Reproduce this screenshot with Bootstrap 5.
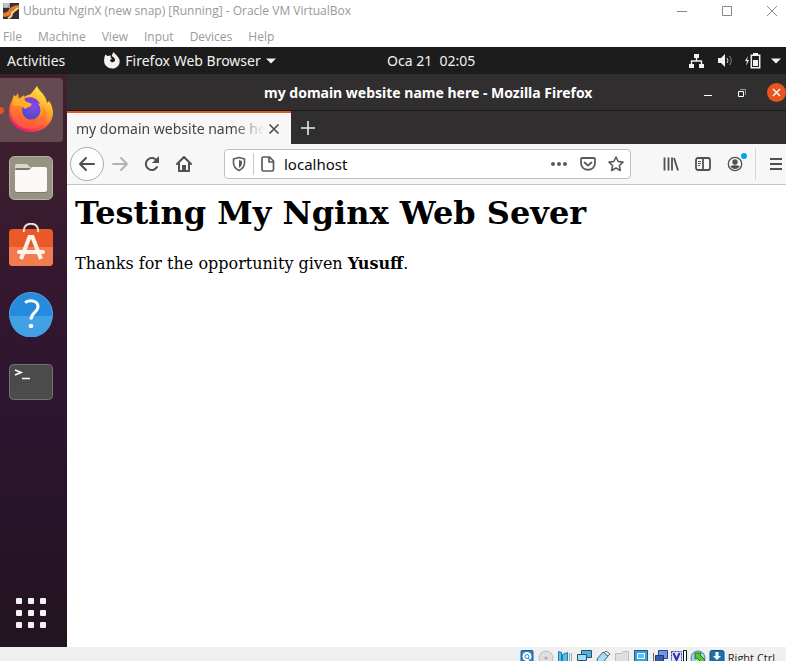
<!DOCTYPE html>
<html lang="en">
<head>
<meta charset="utf-8">
<meta name="viewport" content="width=device-width, initial-scale=1">
<title>Ubuntu NginX (new snap) [Running] - Oracle VM VirtualBox</title>
<link href="https://cdn.jsdelivr.net/npm/bootstrap@5.3.0/dist/css/bootstrap.min.css" rel="stylesheet">
<style>
  body { font-family: "Noto Sans", "Open Sans", sans-serif; font-size: 14px; line-height: 20px; color: #0c0c0d; background: #fff; }
  button { background: none; border: 0; padding: 0; color: inherit; font: inherit; display: inline-flex; align-items: center; justify-content: center; flex: none; }
  svg { display: block; flex: none; }
  .host { font-family: "Open Sans", sans-serif; font-size: 12px; color: #999; }
  .host-title { height: 22px; padding-left: 3px; margin-right: -8px; }
  .host-title button { width: 45px; height: 22px; }
  .host-menu { height: 25px; padding: 4px 3px 0; gap: 16px; }
  .topbar { height: 27px; background: #1c1c1c; color: #f2f2f2; }
  .topbar-left { width: 387px; padding-left: 7px; gap: 38px; }
  .dock { width: 67px; background: linear-gradient(#41202c, #3b1d2f 20%, #32162f 42%, #2d1530 60%, #22141f 100%); padding-top: 4px; }
  .dock-item { width: 63px; height: 64px; margin-bottom: 4px; padding-right: 2px; border-radius: 0 4px 4px 0; }
  .dock-item.current { background: #664a52; }
  .running-dot { left: -3px; top: 29px; width: 7px; height: 7px; border-radius: 50%; background: #e95420; }
  .dock-apps { height: 68px; width: 63px; padding-right: 2px; }
  .win-title { height: 37px; background: #302e2e; border-bottom: 1px solid #191919; color: #fff; padding: 1px 0 0 197px; }
  .win-title h1 { font-size: 14px; line-height: 20px; }
  .win-close { width: 19px; height: 19px; border-radius: 50%; background: #e95420; }
  .tabs { height: 33px; background: #302e2e; color: #f0f0f0; }
  .tab-current { width: 224px; background: #f7f7f8; border-top: 2px solid #e95420; color: #444; padding: 0 11px 0 9px; }
  .tab-label { width: 188px; -webkit-mask-image: linear-gradient(90deg, #000 84%, transparent 100%); mask-image: linear-gradient(90deg, #000 84%, transparent 100%); }
  .new-tab { margin-left: 10px; }
  .toolbar { height: 41px; background: #f7f7f8; border-bottom: 1px solid #c4c4c5; color: #505053; padding-left: 3px; }
  .back { width: 34px; height: 34px; border: 1px solid #aaa; border-radius: 50%; background: #fdfdfd; }
  .tool { width: 32px; height: 32px; }
  .address { height: 30px; border: 1px solid #bfbfc0; border-radius: 4px; background: #fff; margin-left: 24px; padding: 0 6px; }
  .address input { border: 0; outline: 0; background: none; min-width: 0; padding: 0; margin-left: 8px; font-size: 15px; color: #0c0c0d; }
  .address-rule { width: 1px; height: 22px; background: #c8c8c8; margin: 0 6px; }
  .tool-rule { width: 1px; height: 32px; background: #d7d7d8; }
  .menu { margin: 0 4px 0 14px; }
  .account-dot { right: 4px; top: 5px; width: 6px; height: 6px; border-radius: 50%; background: #00a5ee; }
  .page { font-family: "DejaVu Serif", serif; font-size: 16px; line-height: 19px; color: #000; padding: 9px 8px; }
  .page h2 { font-size: 32px; line-height: 38px; font-weight: 700; margin-bottom: 22px; }
  .host-status { height: 14px; background: #f0f0f0; color: #222; font-family: "Open Sans", sans-serif; font-size: 11px; line-height: 16px; padding: 3px 11px 0 0; gap: 3px; }
</style>
<script src="https://cdn.jsdelivr.net/npm/bootstrap@5.3.0/dist/js/bootstrap.bundle.min.js"></script>
</head>
<body class="d-flex flex-column vh-100 overflow-hidden">

<header class="host flex-shrink-0">
  <div class="host-title d-flex align-items-center">
    <svg width="16" height="16" viewBox="0 0 16 16"><path fill="#332e38" d="M0 0h16v16H0z"/><path fill="#9da4ad" d="M0 0h7v5H0z"/><path stroke="#e7e7e7" d="M1 1h5M1 3h4"/><path fill="none" stroke="#e87b2b" stroke-width="4" d="M0 11.500q5 1 7-3T16 4"/><path fill="none" stroke="#ffd68a" stroke-width="2" d="M5 15q4-1 4-5l6-5"/></svg>
    <span class="ms-1 flex-grow-1 text-nowrap">Ubuntu NginX (new snap) [Running] - Oracle VM VirtualBox</span>
    <button type="button" aria-label="Minimize"><svg width="12" height="12" fill="none" stroke="#888"><path d="M1 6.500h10"/></svg></button>
    <button type="button" aria-label="Maximize"><svg width="12" height="12" fill="none" stroke="#888"><path d="M1.500 1.500h9v9h-9z"/></svg></button>
    <button type="button" aria-label="Close"><svg width="12" height="12" fill="none" stroke="#888"><path d="M1 1l10 10M11 1L1 11"/></svg></button>
  </div>
  <nav class="host-menu d-flex align-items-center" aria-label="Virtual machine">
    <button type="button">File</button><button type="button">Machine</button><button type="button">View</button><button type="button">Input</button><button type="button">Devices</button><button type="button">Help</button>
  </nav>
</header>

<div class="topbar d-flex align-items-center flex-shrink-0">
  <div class="topbar-left d-flex flex-shrink-0">
    <button type="button">Activities</button>
    <button type="button">
      <svg class="me-1" width="18" height="18" viewBox="0 0 18 18"><path fill="#f2f2f2" d="M2.500 2.500L4.500 4 8 3.500 7.500 5.500 9 6.500 7 8c.3 3 4.500 3 5 .3.200-1.600-.8-2.800-2-3.300L9 4c0-1.800.8-3 2-4 .2 2 2 2 3.500 4.500C16.500 6.500 17 8 16.500 11c-.7 3.600-4 5.500-7.300 5.500C5 16.500 1.500 13.500 1.200 10 1 7.500 1.200 4.500 2.500 2.500z"/></svg>
      Firefox Web Browser
      <svg class="ms-1" width="12" height="8"><path fill="#f2f2f2" d="M1 1.500h10L6 6.500z"/></svg>
    </button>
  </div>
  <button type="button"><span class="text-nowrap">Oca 21 &nbsp;02:05</span></button>
  <button type="button" class="ms-auto me-1" aria-label="System menu">
    <svg width="94" height="18" viewBox="0 0 94 18" fill="#f2f2f2"><path d="M6 2h5v4H6zM1 12h5v4H1zM11 12h5v4h-5z"/><path fill="none" stroke="#f2f2f2" stroke-width="1.400" d="M8.500 6v3M3.500 12V9h10v3"/><path d="M30 6h3l4-4v13l-4-4h-3z"/><path fill="none" stroke="#ddd" d="M39 6q2 2.500 0 5"/><path fill="none" stroke="#888" d="M41.500 4q3.500 4.500 0 9"/><path d="M60 4l-3 5h2l-1 5 3-6h-2zM65 8h5v6h-5zM65 1h5v2h-5z"/><path fill="none" stroke="#f2f2f2" stroke-width="1.500" d="M63.300 3.300h8.400v12.400h-8.400z"/><path d="M83 6.500h10l-5 5z"/></svg>
  </button>
</div>

<div class="d-flex flex-grow-1 overflow-hidden">
  <nav class="dock d-flex flex-column flex-shrink-0" aria-label="Dock">
    <button type="button" class="dock-item current position-relative" aria-label="Firefox">
      <span class="running-dot position-absolute"></span>
      <svg width="46" height="48" viewBox="0 1 46 48"><defs><linearGradient id="fx" x1=".8" y1=".1" x2=".3" y2="1"><stop offset="0" stop-color="#ffe442"/><stop offset=".38" stop-color="#ffa52b"/><stop offset=".7" stop-color="#ff503d"/><stop offset="1" stop-color="#e91a70"/></linearGradient><radialGradient id="globe" cx=".6" cy=".3" r=".75"><stop offset="0" stop-color="#8b47e9"/><stop offset="1" stop-color="#454bc4"/></radialGradient><linearGradient id="fox" x2="0" y2="1"><stop stop-color="#ff9a22"/><stop offset="1" stop-color="#ff6236"/></linearGradient></defs><path fill="url(#fx)" d="M29 1c3 6 6 7 8 11 1 2 2 4 2 6l2-2c3 4 4 8 4 13-1 10-10 18-22 18S1 39 1 27C1 19 4 15 8 11l2-3 1 6 9-4c3 0 6-5 9-9z"/><circle cx="23" cy="25" r="9.500" fill="url(#globe)"/><path fill="#7542df" d="M14 15c6-5 15-3 18 4-5-2-9-3-14 0z"/><path fill="url(#fox)" d="M6 10l4 4 5-3 1 6c-3 7-2 13 3 17 5 3 12 2 15-3 2-4 1-8-1-11 6 4 8 12 3 18-6 8-22 8-29-1C1 30 1 19 6 10z" opacity=".7"/><path fill="#ffae24" d="M6 10l5 4 5-4 1 6 7 3c-2 4-5 3-7 5-3-4-7-4-12-3 0-4 0-7 1-11z"/></svg>
    </button>
    <button type="button" class="dock-item" aria-label="Files">
      <svg width="46" height="46" viewBox="0 0 46 46"><rect x="1.500" y="1.500" width="43" height="43" rx="5" fill="#979383" stroke="#b6b1a4"/><path fill="#dad6cc" d="M7 19V11q0-2 2-2h10l4 4v6z"/><rect x="7" y="13" width="32" height="25" rx="2" fill="#7d796c"/><path fill="#faf9f7" d="M7 15h13q2 0 3-2l1-1h13q2 0 2 2v21q0 2-2 2H9q-2 0-2-2z"/></svg>
    </button>
    <button type="button" class="dock-item" aria-label="Ubuntu Software">
      <svg width="46" height="46" viewBox="0 2 46 46"><rect x="1" y="8" width="44" height="37" rx="4" fill="#e95a28"/><path fill="#f17c50" d="M1 26h44v15q0 4-4 4H5q-4 0-4-4z"/><path fill="none" stroke="#f4ddc4" stroke-width="2" d="M16 11C14 0 32 0 30 11"/><path fill="none" stroke="#fff3ec" stroke-width="4" d="M13 38l8.500-22h3L33 38"/><path stroke="#fff3ec" stroke-width="4" stroke-linecap="round" d="M11 31h24"/></svg>
    </button>
    <button type="button" class="dock-item" aria-label="Help">
      <svg width="46" height="46" viewBox="0 0 46 46"><circle cx="23" cy="23" r="21.500" fill="#268bdc" stroke="#57a4df"/><path fill="#43a0e5" d="M1.500 25h43a21.500 21.500 0 0 1-43 0z"/><path fill="none" stroke="#fff" stroke-width="3" d="M17 11.500c5-3 13-2 13 4 0 6-7 6-7 13"/><circle cx="23" cy="35" r="2.300" fill="#fff"/></svg>
    </button>
    <button type="button" class="dock-item" aria-label="Terminal">
      <svg width="46" height="38" viewBox="0 0 46 38"><rect x="1.500" y="1.500" width="43" height="35" rx="4" fill="#4b4b4b" stroke="#737373"/><path fill="none" stroke="#fff" stroke-width="1.700" d="M7 7l6 2.500L7 12M14 15.500h8"/></svg>
    </button>
    <button type="button" class="dock-apps mt-auto" aria-label="Show Applications">
      <svg width="32" height="32" viewBox="0 0 32 32" fill="#f4f2f3"><rect x="1" y="1" width="6" height="6" rx="1"/><rect x="13" y="1" width="6" height="6" rx="1"/><rect x="25" y="1" width="6" height="6" rx="1"/><rect x="1" y="13" width="6" height="6" rx="1"/><rect x="13" y="13" width="6" height="6" rx="1"/><rect x="25" y="13" width="6" height="6" rx="1"/><rect x="1" y="25" width="6" height="6" rx="1"/><rect x="13" y="25" width="6" height="6" rx="1"/><rect x="25" y="25" width="6" height="6" rx="1"/></svg>
    </button>
  </nav>

  <main class="d-flex flex-column flex-grow-1 overflow-hidden">
    <div class="win-title d-flex align-items-center flex-shrink-0">
      <h1 class="fw-bold m-0 me-auto text-nowrap">my domain website name here - Mozilla Firefox</h1>
      <button type="button" class="me-4" aria-label="Minimize"><svg width="10" height="12"><path stroke="#fff" d="M1 8.500h8"/></svg></button>
      <button type="button" class="me-3 pe-1" aria-label="Restore"><svg width="10" height="10" fill="none" stroke="#fff"><path d="M1.500 3.500h5v5h-5z"/><path stroke="#999" d="M3 1.500h5.500V7"/></svg></button>
      <button type="button" class="win-close" aria-label="Close"><svg width="11" height="11" stroke="#fff" stroke-width="1.400"><path d="M2 2l7 7M9 2L2 9"/></svg></button>
    </div>
    <div class="tabs d-flex flex-shrink-0">
      <div class="tab-current d-flex align-items-center justify-content-between">
        <span class="tab-label text-nowrap overflow-hidden">my domain website name here</span>
        <button type="button" aria-label="Close tab"><svg width="12" height="12" stroke="#4a4a4d" stroke-width="1.600"><path d="M1.500 1.500l9 9M10.500 1.500l-9 9"/></svg></button>
      </div>
      <button type="button" class="new-tab" aria-label="New tab"><svg width="14" height="14" stroke="#e8e8e8" stroke-width="1.600"><path d="M7 0v14M0 7h14"/></svg></button>
    </div>
    <div class="toolbar d-flex align-items-center flex-shrink-0">
      <button type="button" class="back" aria-label="Back"><svg width="18" height="16" fill="none" stroke="#505053" stroke-width="2" stroke-linecap="round" stroke-linejoin="round"><path d="M8 2L2 8l6 6M2 8h14"/></svg></button>
      <button type="button" class="tool" aria-label="Forward"><svg width="18" height="16" fill="none" stroke="#b2b2b4" stroke-width="2" stroke-linecap="round" stroke-linejoin="round"><path d="M10 2l6 6-6 6M16 8H2"/></svg></button>
      <button type="button" class="tool" aria-label="Reload"><svg width="18" height="18" fill="none" stroke="#505053" stroke-width="2" stroke-linecap="round"><path d="M14 12a6 6 0 1 1 0-6"/><path fill="#505053" stroke="none" d="M16 1v7H9z"/></svg></button>
      <button type="button" class="tool" aria-label="Home"><svg width="18" height="18" fill="none" stroke="#505053" stroke-width="2" stroke-linecap="round" stroke-linejoin="round"><path d="M2 9l7-7 7 7M4 8v8h10V8"/><path fill="#505053" stroke="none" d="M7 10h4v6H7z"/></svg></button>
      <div class="address d-flex align-items-center flex-grow-1">
        <button type="button" aria-label="Tracking protection"><svg width="16" height="16" fill="none" stroke="#5b5b5e" stroke-width="1.600" stroke-linejoin="round"><path d="M8 1.500l5.500 1.500v4c0 4-2.500 6-5.500 7.500C5 13 2.500 11 2.500 7V3z"/><path fill="#5b5b5e" stroke="none" d="M8 4l3 1v2c0 2-1 3.500-3 5z"/></svg></button>
        <span class="address-rule"></span>
        <button type="button" aria-label="Site information"><svg width="16" height="16" fill="none" stroke="#5b5b5e" stroke-width="1.700" stroke-linejoin="round"><path d="M3.500 1h6l4 4v8.500q0 1.500-1.500 1.500H3.500Q2 15 2 13.500v-11Q2 1 3.500 1z"/><path d="M9 1v5h4.500"/></svg></button>
        <input type="text" class="flex-grow-1" value="localhost" aria-label="Address">
        <button type="button" class="me-2" aria-label="Page actions"><svg width="18" height="16" fill="#5b5b5e"><circle cx="3" cy="8" r="2"/><circle cx="9" cy="8" r="2"/><circle cx="15" cy="8" r="2"/></svg></button>
        <button type="button" class="mx-1" aria-label="Save to Pocket"><svg width="16" height="16" fill="none" stroke="#5b5b5e" stroke-width="1.800" stroke-linecap="round" stroke-linejoin="round"><path d="M2 2h12q1 0 1 1v4c0 9-14 9-14 0V3q0-1 1-1z"/><path d="M4.500 6.500L8 9.500l3.500-3"/></svg></button>
        <button type="button" class="ms-2" aria-label="Bookmark"><svg width="16" height="16" fill="none" stroke="#5b5b5e" stroke-width="1.600" stroke-linejoin="round"><path d="M8 1l2.100 4.500 4.900.6-3.600 3.400.9 5L8 12l-4.300 2.500.9-5L1 6.100l4.900-.6z"/></svg></button>
      </div>
      <button type="button" class="tool ms-4" aria-label="Library"><svg width="16" height="16" fill="none" stroke="#505053" stroke-width="1.800"><path d="M1.500 1.500v13M5.500 1.500v13M9 1.500v13M11 2l4 12.500"/></svg></button>
      <button type="button" class="tool" aria-label="Sidebars"><svg width="16" height="16" fill="none" stroke="#505053" stroke-width="1.800"><rect x="1" y="2" width="14" height="12" rx="2"/><path d="M8 2v12"/><path stroke-width="1" d="M3 5.500h3M3 7.500h3M3 9.500h2"/></svg></button>
      <button type="button" class="tool position-relative" aria-label="Account"><svg width="16" height="16"><circle cx="8" cy="8" r="6.700" fill="none" stroke="#505053" stroke-width="1.300"/><circle cx="8" cy="6" r="2.700" fill="#505053"/><path fill="#505053" d="M3.500 10c2-1 7-1 9 0-1 4-8 4-9 0z"/></svg><span class="account-dot position-absolute"></span></button>
      <span class="tool-rule ms-1"></span>
      <button type="button" class="menu" aria-label="Menu"><svg width="12" height="14" stroke="#505053" stroke-width="2"><path d="M0 2h12M0 7h12M0 12h12"/></svg></button>
    </div>
    <article class="page flex-grow-1">
      <h2>Testing My Nginx Web Sever</h2>
      <p class="m-0">Thanks for the opportunity given <b>Yusuff</b>.</p>
    </article>
  </main>
</div>

<footer class="host-status d-flex justify-content-end align-items-start overflow-hidden flex-shrink-0">
  <svg width="16" height="16"><rect x="2" y=".5" width="12" height="14" rx="1" fill="#2f82bd" stroke="#17629c"/><circle cx="8" cy="6.500" r="4.500" fill="#fff"/><circle cx="8" cy="6.500" r="2" fill="none" stroke="#2f82bd"/><path stroke="#2f82bd" d="M9 8l4 4"/></svg>
  <svg width="16" height="16"><circle cx="8" cy="8" r="7" fill="#dedede" stroke="#bcbcbc"/><circle cx="8" cy="8" r="1.500" fill="#aaa"/></svg>
  <svg width="16" height="16"><path fill="#55bfe5" stroke="#1d7ca8" d="M1.500 1.500l3 1v11h-3zM5.500 4.500l5-2v11l-5-2z"/><path fill="none" stroke="#9aabb5" d="M12.500 3v10M14.500 3v10"/></svg>
  <svg width="16" height="16"><path fill="#4fb3de" stroke="#30516c" d="M5.500.5h10v7h-10z"/><path fill="#9cdcf4" stroke="#30516c" d="M1.500 4.500h9v6h-9zM3.500 12.500h6"/></svg>
  <svg width="16" height="16"><path fill="#a8dcf0" stroke="#376d8b" d="M2 9l6-7 5 4-6 8H3z"/><path fill="#eee" stroke="#666" d="M9 3l2-2 4 3-2 2z"/></svg>
  <svg width="16" height="16"><path fill="#dedede" stroke="#bdbdbd" d="M1.500 3.500h6l2-2h5v13h-13z"/></svg>
  <svg width="16" height="16"><path fill="#3fa1d2" stroke="#145d8d" d="M1.500.5h13v13h-13z"/><path fill="#58c2ed" stroke="#fff" d="M4.500 3.500h7v5h-7z"/></svg>
  <svg width="16" height="16"><path fill="#7197dd" stroke="#26468c" d="M6.500.5h9v8h-9z"/><path fill="#3459ad" stroke="#203879" d="M3.500 5.500h8v6h-8z"/><path stroke="#666" d="M1.500 3v9"/></svg>
  <svg width="16" height="16"><path fill="#e4e4ff" stroke="#3939a0" stroke-dasharray="2 1" d="M.5 1.500h10v12H.5z"/><path fill="none" stroke="#3030b0" stroke-width="2" d="M2.500 3l3 7 3-7"/><path fill="#fff" stroke="#111" d="M12.500.5h3v14h-3z"/></svg>
  <svg width="16" height="16"><circle cx="8" cy="8" r="7" fill="#9fd3e8" stroke="#3d88a8"/><path fill="#57c52d" stroke="#27741a" d="M5 3h6l-1 2 5 5-3 3-5-5-2 1z"/></svg>
  <svg width="16" height="16"><rect x="1" y=".5" width="14" height="14" rx="2" fill="#1d70ad" stroke="#154c79"/><path fill="#fff" d="M6.500 2h3v4H12l-4 4-4-4h2.500z"/></svg>
  <span class="text-nowrap">Right Ctrl</span>
</footer>
</body>
</html>
